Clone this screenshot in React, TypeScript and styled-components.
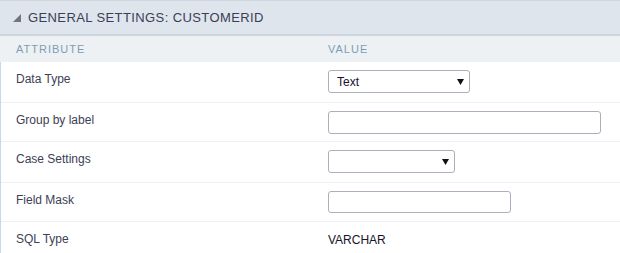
import * as React from 'react'
import styled, { createGlobalStyle } from 'styled-components'

const GlobalStyle = createGlobalStyle`
  html, body {
    margin: 0;
    padding: 0;
    background: #ffffff;
  }
  body {
    font-family: "Liberation Sans", Arial, sans-serif;
  }
`

const Panel = styled.div`
  width: 620px;
  height: 253px;
  overflow: hidden;
  background: #ffffff;
`

const Header = styled.div`
  display: flex;
  align-items: center;
  gap: 7px;
  height: 33px;
  padding-left: 13px;
  background: #dfe5ec;
  border-top: 1px solid #cdd6df;
  border-bottom: 2px solid #cdd6df;
`

const Title = styled.span`
  font-size: 13px;
  letter-spacing: 0.4px;
  color: #3b3e58;
`

const ColumnHead = styled.div`
  display: grid;
  grid-template-columns: 312px 1fr;
  align-items: center;
  height: 26px;
  background: #edf1f4;
  span {
    padding-left: 16px;
    font-size: 11px;
    letter-spacing: 1px;
    color: #7e9db6;
  }
`

const Body = styled.div`
  border-left: 1px solid #ccd8e3;
`

const Row = styled.div<{ $h: number }>`
  display: grid;
  grid-template-columns: 311px 1fr;
  align-items: start;
  height: ${p => p.$h}px;
  box-sizing: border-box;
  border-bottom: 1px solid #edf0f5;
`

const Label = styled.div`
  padding: 10px 0 0 15px;
  font-size: 12px;
  line-height: 14px;
  color: #3c4154;
`

const Value = styled.div`
  padding: 8px 0 0 16px;
`

const Plain = styled.div`
  padding-top: 3px;
  font-size: 12px;
  line-height: 14px;
  color: #14142a;
`

const SelectBox = styled.div<{ $w: number }>`
  display: flex;
  align-items: center;
  justify-content: space-between;
  width: ${p => p.$w}px;
  height: 23px;
  box-sizing: border-box;
  padding: 0 5px 0 8px;
  border: 1px solid #a9b0bc;
  border-radius: 3px;
  font-size: 12px;
  color: #1a0f2e;
`

const TextInput = styled.div<{ $w: number; $h: number }>`
  width: ${p => p.$w}px;
  height: ${p => p.$h}px;
  box-sizing: border-box;
  border: 1px solid #a9b0bc;
  border-radius: 3px;
`

const Caret = () => (
  <svg width="7" height="6" viewBox="0 0 7 6">
    <polygon points="0,0 7,0 3.5,6" fill="#111" />
  </svg>
)

const Corner = () => (
  <svg width="8" height="8" viewBox="0 0 8 8">
    <polygon points="8,0 8,8 0,8" fill="#6f7682" />
  </svg>
)

export default function App() {
  return (
    <>
      <GlobalStyle />
      <Panel>
        <Header>
          <Corner />
          <Title>GENERAL SETTINGS: CUSTOMERID</Title>
        </Header>
        <ColumnHead>
          <span>ATTRIBUTE</span>
          <span>VALUE</span>
        </ColumnHead>
        <Body>
          <Row $h={41}>
            <Label>Data Type</Label>
            <Value>
              <SelectBox $w={142}>
                <span>Text</span>
                <Caret />
              </SelectBox>
            </Value>
          </Row>
          <Row $h={39}>
            <Label>Group by label</Label>
            <Value>
              <TextInput $w={273} $h={23} />
            </Value>
          </Row>
          <Row $h={41}>
            <Label>Case Settings</Label>
            <Value>
              <SelectBox $w={127}>
                <span />
                <Caret />
              </SelectBox>
            </Value>
          </Row>
          <Row $h={39}>
            <Label>Field Mask</Label>
            <Value>
              <TextInput $w={183} $h={22} />
            </Value>
          </Row>
          <Row $h={40}>
            <Label>SQL Type</Label>
            <Value>
              <Plain>VARCHAR</Plain>
            </Value>
          </Row>
        </Body>
      </Panel>
    </>
  )
}
